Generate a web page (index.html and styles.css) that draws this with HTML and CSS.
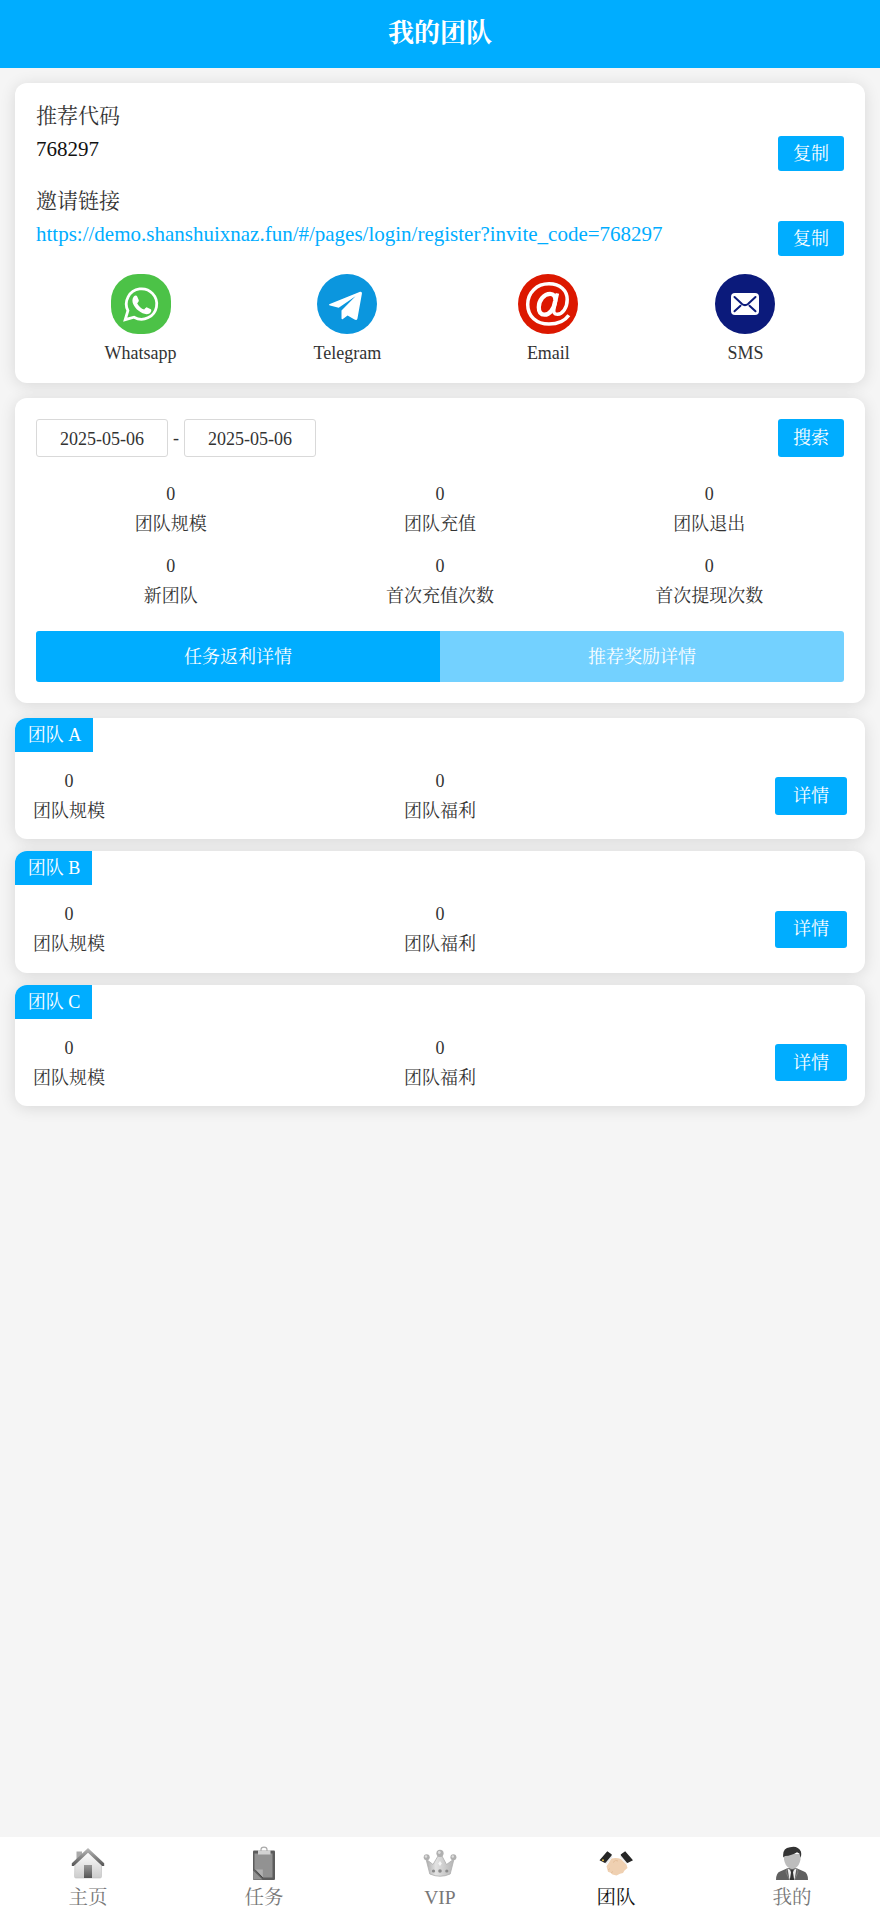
FILE: index.html
```html
<!DOCTYPE html>
<html lang="zh-CN">
<head>
<meta charset="utf-8">
<title>我的团队</title>
<link rel="stylesheet" href="styles.css">
</head>
<body>
<div class="page">
  <header class="header">我的团队</header>
  <main class="main">
    <section class="card invite">
      <div class="label">推荐代码</div>
      <div class="row"><span class="value">768297</span><button class="btn">复制</button></div>
      <div class="label second">邀请链接</div>
      <div class="row"><span class="value link">https://demo.shanshuixnaz.fun/#/pages/login/register?invite_code=768297</span><button class="btn">复制</button></div>
      <div class="shares">
        <div class="share">
          <svg class="share-icon" viewBox="0 0 60 60"><rect width="60" height="60" rx="27" fill="#4cc247"/><path d="M14.200 45.700l2.700-9A15.200 15.200 0 1 1 23 43.200z" fill="none" stroke="#fff" stroke-width="2.800" stroke-linejoin="miter"/><path d="M22.600 22.800c1.300-1.500 3-1.600 3.600-.2l1.500 3.500c.4 1-.2 1.900-1.500 3.300 1.700 3 4 5 7 6.200 1.300-1.600 2-2.600 2.900-2.200l3.700 1.800c1.200.6.3 3.300-1.300 4.200-3 1.700-7 .5-11.200-2.800-4.200-3.500-7.800-9.400-4.700-13.800z" fill="#fff"/></svg>
          <span>Whatsapp</span>
        </div>
        <div class="share">
          <svg class="share-icon" viewBox="0 0 60 60"><circle cx="30" cy="30" r="30" fill="#0b96de"/><path d="M12.800 29.900L42.500 18c1.600-.6 2.700.1 2.400 1.800l-4.400 24.500c-.3 1.800-1.500 2.200-3 1.300l-6.900-4.200-4.700 3.600c-.8.6-1.400.3-1.400-.7v-7.700l14-14.300-16.800 11.500-8.700-2.300c-1.200-.4-1.200-1.200-.2-1.600z" fill="#fff"/></svg>
          <span>Telegram</span>
        </div>
        <div class="share">
          <svg class="share-icon" viewBox="0 0 60 60"><circle cx="30" cy="30" r="30" fill="#dc1800"/><g fill="none" stroke="#fff" stroke-linecap="butt"><path d="M50.800 41.200c-3.800 5.400-11.300 8.800-19.800 8.800-12.500 0-21.300-7.600-21.300-19.500C9.700 18.500 18.700 9.800 31 9.800c11.200 0 18.200 6.700 18.200 15.800 0 8.400-4.700 14.700-9.700 14.700-3.300 0-4.300-2-3.600-5.400l3.500-15.500" stroke-width="3.500"/><path d="M37.300 26.500c.5-4.200-1.800-6.700-5.200-6.700-6 0-11.300 6.200-11.300 13.500 0 4.600 2 7.400 5.700 7.400 5.200 0 9.500-5.500 10.800-14.200z" stroke-width="4.300"/></g></svg>
          <span>Email</span>
        </div>
        <div class="share">
          <svg class="share-icon" viewBox="0 0 60 60"><circle cx="30" cy="30" r="30" fill="#0b1a7b"/><rect x="16" y="19" width="28" height="22" rx="4" fill="#fff"/><path d="M19.500 23l7.500 7q3 2.300 6 0l7.500-7M19.500 37.300l6-5.600M40.500 37.300l-6-5.600" fill="none" stroke="#0b1a7b" stroke-width="2" stroke-linecap="round"/></svg>
          <span>SMS</span>
        </div>
      </div>
    </section>

    <section class="card summary">
      <div class="filter">
        <span class="date">2025-05-06</span><span class="dash">-</span><span class="date">2025-05-06</span>
        <button class="btn search">搜索</button>
      </div>
      <div class="stats">
        <div class="stat"><span>0</span><span>团队规模</span></div>
        <div class="stat"><span>0</span><span>团队充值</span></div>
        <div class="stat"><span>0</span><span>团队退出</span></div>
        <div class="stat"><span>0</span><span>新团队</span></div>
        <div class="stat"><span>0</span><span>首次充值次数</span></div>
        <div class="stat"><span>0</span><span>首次提现次数</span></div>
      </div>
      <div class="segments">
        <button class="segment active">任务返利详情</button>
        <button class="segment">推荐奖励详情</button>
      </div>
    </section>

    <div class="teams">
      <section class="card team">
        <div class="tag">团队 A</div>
        <div class="team-row">
          <div class="stat"><span>0</span><span>团队规模</span></div>
          <div class="stat"><span>0</span><span>团队福利</span></div>
          <button class="btn detail">详情</button>
        </div>
      </section>
      <section class="card team">
        <div class="tag">团队 B</div>
        <div class="team-row">
          <div class="stat"><span>0</span><span>团队规模</span></div>
          <div class="stat"><span>0</span><span>团队福利</span></div>
          <button class="btn detail">详情</button>
        </div>
      </section>
      <section class="card team">
        <div class="tag">团队 C</div>
        <div class="team-row">
          <div class="stat"><span>0</span><span>团队规模</span></div>
          <div class="stat"><span>0</span><span>团队福利</span></div>
          <button class="btn detail">详情</button>
        </div>
      </section>
    </div>
  </main>

  <nav class="tabbar">
    <a class="tab">
      <svg class="tab-icon" viewBox="0 0 34 34">
        <defs>
          <linearGradient id="door" x2="0" y2="1"><stop stop-color="#999"/><stop offset="1" stop-color="#555"/></linearGradient>
          <linearGradient id="wall" x2="0" y2="1"><stop stop-color="#fff"/><stop offset="1" stop-color="#ccc"/></linearGradient>
          <linearGradient id="roof" x2="0" y2="1"><stop stop-color="#bbb"/><stop offset="1" stop-color="#555"/></linearGradient>
        </defs>
        <path d="M5.500 5.500h5.500v6l-5.500 5z" fill="#aaa"/>
        <path d="M4 18L17 5.500 30.500 18v12.500a1.500 1.500 0 0 1-1.500 1.500H5a1.500 1.500 0 0 1-1.500-1.500z" fill="url(#wall)" stroke="#c4c4c4" stroke-width=".7"/>
        <path d="M13 19h8v13h-8z" fill="url(#door)"/>
        <path d="M.8 17.200L17 2l16.200 15.200v2.800h-2L17 6.700 2.800 20h-2z" fill="url(#roof)"/>
      </svg>
      <span>主页</span>
    </a>
    <a class="tab">
      <svg class="tab-icon" viewBox="0 0 34 34">
        <path d="M7 4.500h20a1 1 0 0 1 1 1V33a1 1 0 0 1-1 1H7a1 1 0 0 1-1-1V5.500a1 1 0 0 1 1-1z" fill="#5c5c5c"/>
        <path d="M7.500 7.500h18v24H16L7.500 24z" fill="#929292"/>
        <path d="M6.200 24.500l9.300 9h-9.300z" fill="#929292"/>
        <path d="M7.800 23.500h8v8.300z" fill="#b0b0b0"/>
        <path d="M7.800 23.500l8 8.300" stroke="#444" stroke-width="1"/>
        <path d="M11 4h12.500v4.500H11z" fill="#d2d2d2"/>
        <path d="M14 5V3.500a3 2.300 0 0 1 6 0V5" fill="none" stroke="#aaa" stroke-width="1.200"/>
      </svg>
      <span>任务</span>
    </a>
    <a class="tab">
      <svg class="tab-icon" viewBox="0 0 34 34">
        <defs><linearGradient id="crown"><stop stop-color="#aaa"/><stop offset=".35" stop-color="#e2e2e2"/><stop offset="1" stop-color="#b4b4b4"/></linearGradient></defs>
        <path d="M3 13l7 5.500L15 10h4L23.500 18.500 31 13l-3.800 15q-10 4.500-20.400 0z" fill="url(#crown)" stroke="#adadad" stroke-width=".8"/>
        <circle cx="17" cy="7.300" r="3.600" fill="#b0b0b0"/><circle cx="16.300" cy="6.500" r="1.400" fill="#ddd"/>
        <circle cx="3.700" cy="11.200" r="3" fill="#b0b0b0"/><circle cx="3" cy="10.500" r="1.200" fill="#ddd"/>
        <circle cx="30.400" cy="11.200" r="3" fill="#b0b0b0"/><circle cx="29.800" cy="10.500" r="1.200" fill="#ddd"/>
        <path d="M17 15l1.800 2.500L17 20l-1.800-2.500z" fill="#f5f5f5"/>
        <g fill="#8b8b8b"><circle cx="10.500" cy="25" r="1.600"/><circle cx="17" cy="25" r="1.800"/><circle cx="23.800" cy="25" r="1.600"/></g>
      </svg>
      <span>VIP</span>
    </a>
    <a class="tab current">
      <svg class="tab-icon" viewBox="0 0 34 34">
        <path d="M12.500 12.500q5-1 9.500.5l5.500 5.500 1 3.500-3 2.500-1.500 2.500-3 .8-3.500 1.700-4-1-2-1.700-2.500-1-1.500-5.500z" fill="#efd0b1"/>
        <path d="M14 16.500q2.500-3.500 5-1.500M9 24l2-1.500M12 27l2-1.500" fill="none" stroke="#dfb993" stroke-width=".8"/>
        <path d="M13 10.200L6.800 18M21.500 10.200L28 17.500" stroke="#ececec" stroke-width="1.800"/>
        <path d="M8.300 5.200l4.200 3.100q.6.500.1 1.200l-5.800 7q-.5.700-1.300.3L.5 14.200z" fill="#262626"/>
        <path d="M26.200 5.200l-4.200 3.100q-.6.500-.1 1.200l5.800 7q.5.700 1.300.3l5-2.600z" fill="#262626"/>
        <circle cx="4" cy="14.200" r="1" fill="#e2bd4b"/>
      </svg>
      <span>团队</span>
    </a>
    <a class="tab">
      <svg class="tab-icon" viewBox="0 0 34 34">
        <path d="M1 34q0-7 4-8.500L13 22h8l8 3.500q4 1.500 4 8.500z" fill="#606060"/>
        <path d="M12.500 22l4.500 3.500 4.500-3.500-2 12h-5z" fill="#eee"/>
        <path d="M15.300 24h3.400l-.7 2.500 1.200 7.500h-4.400l1.200-7.500z" fill="#333"/>
        <path d="M12.500 22L11 26l3.500 8M21.500 22l1.500 4-3.500 8" fill="none" stroke="#888" stroke-width=".8"/>
        <path d="M9 8h16.500v5.500q-1 6-5 8.500-3.300 2-6.500 0-4-2.500-5-8.500z" fill="#bdbdbd"/>
        <path d="M8.300 11.500Q7 2 15 1.200q7.500-2 10.800 4 1 3-.2 6.500l-1.200-4.200-2.400-1.300q-5 3.300-12 3.800z" fill="#333"/>
      </svg>
      <span>我的</span>
    </a>
  </nav>
</div>
</body>
</html>
```
FILE: styles.css
```css
* { box-sizing: border-box; }

body {
  margin: 0;
  background: #f5f5f5;
  color: #333;
  font: 18px/22px "Liberation Serif", "Noto Serif CJK SC", "Noto Serif SC", "Source Han Serif SC", SimSun, "AR PL UMing CN", "Noto Sans CJK SC", serif;
}

button {
  border: 0;
  padding: 0;
  font: inherit;
  color: #fff;
}

.page {
  display: flex;
  flex-direction: column;
  min-height: 100vh;
}

.header {
  height: 68px;
  background: #00adff;
  color: #fff;
  font-size: 26px;
  font-weight: bold;
  line-height: 68px;
  text-align: center;
}

.main {
  flex: 1;
  display: flex;
  flex-direction: column;
  gap: 15px;
  padding: 15px;
}

.card {
  background: #fff;
  border-radius: 12px;
  box-shadow: 0 2px 16px rgba(0, 0, 0, 0.12);
}

.invite { padding: 21px 21px 19px; }

.label {
  margin-bottom: 8px;
  font-size: 21px;
  line-height: 24px;
}

.second { margin-top: 18px; }

.row {
  display: flex;
  justify-content: space-between;
  align-items: flex-start;
}

.value {
  color: #111;
  font-size: 21px;
  line-height: 26px;
}

.link { color: #00adff; }

.btn {
  width: 66px;
  height: 35px;
  border-radius: 3px;
  background: #00adff;
}

.shares {
  display: flex;
  justify-content: space-around;
  margin-top: 18px;
}

.share {
  display: flex;
  flex-direction: column;
  align-items: center;
  gap: 8px;
}

.share-icon {
  width: 60px;
  height: 60px;
}

.summary { padding: 21px; }

.filter {
  display: flex;
  align-items: center;
}

.date {
  width: 132px;
  height: 38px;
  border: 1px solid #d9d9d9;
  border-radius: 3px;
  line-height: 38px;
  text-align: center;
}

.dash {
  width: 16px;
  text-align: center;
}

.search {
  height: 38px;
  margin-left: auto;
}

.stats {
  display: grid;
  grid-template-columns: repeat(3, 1fr);
  row-gap: 20px;
  margin: 25.5px 0 24.5px;
}

.stat {
  display: flex;
  flex-direction: column;
  align-items: center;
  gap: 8px;
}

.segments {
  display: flex;
  overflow: hidden;
  border-radius: 3px;
}

.segment {
  flex: 1;
  height: 51px;
  background: #73d1ff;
}

.active { background: #00adff; }

.teams {
  display: flex;
  flex-direction: column;
  gap: 12px;
}

.team {
  height: 121.3px;
  overflow: hidden;
}

.tag {
  width: fit-content;
  height: 34px;
  padding: 0 11.5px 0 12.8px;
  background: #00adff;
  color: #fff;
  line-height: 34px;
}

.team-row {
  display: flex;
  justify-content: space-between;
  align-items: center;
  padding: 18px 18px 0;
}

.detail {
  width: 72px;
  height: 37.2px;
}

.tabbar {
  display: flex;
  height: 81px;
  background: #fff;
}

.tab {
  flex: 1;
  display: flex;
  flex-direction: column;
  align-items: center;
  gap: 5px;
  padding-top: 9px;
  color: #777;
  font-size: 19.5px;
  line-height: 25px;
}

.current { color: #111; }

.tab-icon {
  width: 34px;
  height: 34px;
}
```
